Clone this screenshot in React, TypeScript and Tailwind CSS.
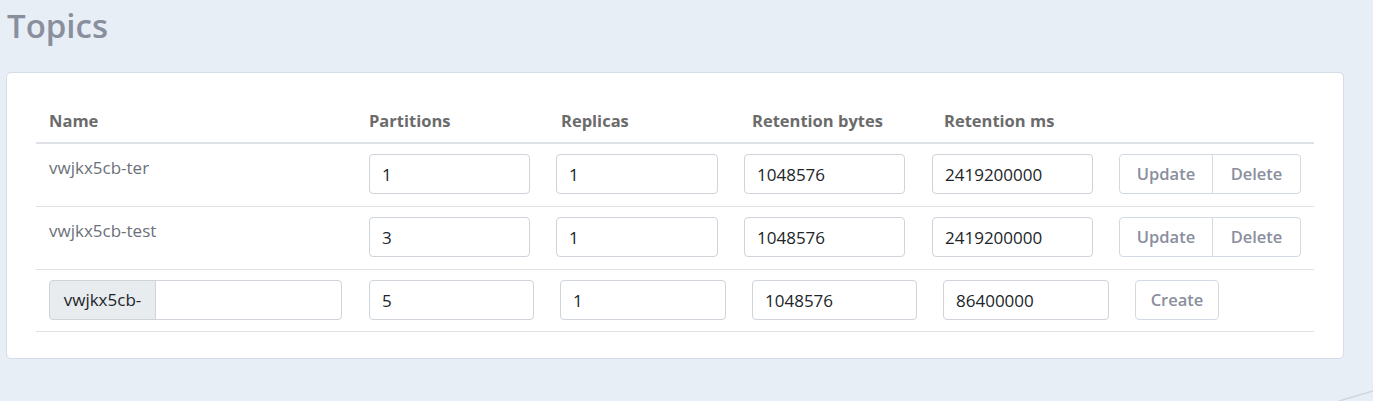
import { useState } from "react";

type Topic = {
  name: string;
  partitions: string;
  replicas: string;
  retentionBytes: string;
  retentionMs: string;
};

const initialTopics: Topic[] = [
  { name: "vwjkx5cb-ter", partitions: "1", replicas: "1", retentionBytes: "1048576", retentionMs: "2419200000" },
  { name: "vwjkx5cb-test", partitions: "3", replicas: "1", retentionBytes: "1048576", retentionMs: "2419200000" },
];

const inputCls =
  "h-10 rounded-[4px] border border-[#ced4da] bg-white px-3 text-[17px] text-[#212529] outline-none focus:border-[#80bdff]";

const btnCls =
  "h-10 border border-[#d3d9e3] bg-white px-3 text-[16.5px] font-semibold text-[#8a8e9e] hover:bg-gray-50";

export default function App() {
  const [topics, setTopics] = useState<Topic[]>(initialTopics);
  const [draft, setDraft] = useState({
    name: "",
    partitions: "5",
    replicas: "1",
    retentionBytes: "1048576",
    retentionMs: "86400000",
  });

  const setField = (i: number, key: keyof Topic, value: string) => {
    setTopics((prev) => prev.map((t, idx) => (idx === i ? { ...t, [key]: value } : t)));
  };

  return (
    <div
      className="relative min-h-screen bg-[#e8eef6] pl-[6px] pr-[29px] pt-[1px]"
      style={{ fontFamily: '"Open Sans", "Noto Sans", sans-serif' }}
    >
      <h1 className="ml-px h-[71px] pt-[5px] text-[33px] font-semibold leading-[40px] text-[#8a8f9e]">Topics</h1>

      <div className="rounded-[5px] border border-[#d4dce8] bg-white px-[29px] pb-[26px] pt-[25px]">
        {/* header */}
        <div className="flex h-[46px] items-start border-b-2 border-[#dee2e6] pl-[13px] pt-[11px] text-[16.5px] font-bold leading-6 text-[#6b6b6b]">
          <div className="w-[320px]">Name</div>
          <div className="w-[192px]">Partitions</div>
          <div className="w-[191px]">Replicas</div>
          <div className="w-[192px]">Retention bytes</div>
          <div>Retention ms</div>
        </div>

        {topics.map((t, i) => (
          <div key={t.name} className="flex h-[63px] items-start border-b border-[#dee2e6] pl-[13px] pt-[10px]">
            <div className="w-[320px] pt-[2px] text-[17px] leading-6 text-[#6c7079]">{t.name}</div>
            <input
              value={t.partitions}
              onChange={(e) => setField(i, "partitions", e.target.value)}
              className={`${inputCls} w-[161px]`}
            />
            <input
              value={t.replicas}
              onChange={(e) => setField(i, "replicas", e.target.value)}
              className={`${inputCls} ml-[26px] w-[162px]`}
            />
            <input
              value={t.retentionBytes}
              onChange={(e) => setField(i, "retentionBytes", e.target.value)}
              className={`${inputCls} ml-[26px] w-[161px]`}
            />
            <input
              value={t.retentionMs}
              onChange={(e) => setField(i, "retentionMs", e.target.value)}
              className={`${inputCls} ml-[27px] w-[161px]`}
            />
            <div className="ml-[26px] flex">
              <button className={`${btnCls} w-[94px] rounded-l-[4px]`}>Update</button>
              <button
                onClick={() => setTopics((prev) => prev.filter((_, idx) => idx !== i))}
                className={`${btnCls} -ml-px w-[89px] rounded-r-[4px]`}
              >
                Delete
              </button>
            </div>
          </div>
        ))}

        {/* create row */}
        <div className="flex h-[62px] items-start border-b border-[#dee2e6] pl-[13px] pt-[10px]">
          <div className="flex h-10 w-[293px] shrink-0">
            <span className="flex h-10 w-[107px] shrink-0 items-center justify-center rounded-l-[4px] border border-[#ced4da] bg-[#e9ecef] text-[17px] text-[#212529]">
              vwjkx5cb-
            </span>
            <input
              value={draft.name}
              onChange={(e) => setDraft({ ...draft, name: e.target.value })}
              className="-ml-px h-10 w-0 min-w-0 flex-1 rounded-r-[4px] border border-[#ced4da] px-3 text-[17px] outline-none"
            />
          </div>
          <input
            value={draft.partitions}
            onChange={(e) => setDraft({ ...draft, partitions: e.target.value })}
            className={`${inputCls} ml-[27px] w-[165px]`}
          />
          <input
            value={draft.replicas}
            onChange={(e) => setDraft({ ...draft, replicas: e.target.value })}
            className={`${inputCls} ml-[26px] w-[166px]`}
          />
          <input
            value={draft.retentionBytes}
            onChange={(e) => setDraft({ ...draft, retentionBytes: e.target.value })}
            className={`${inputCls} ml-[26px] w-[165px]`}
          />
          <input
            value={draft.retentionMs}
            onChange={(e) => setDraft({ ...draft, retentionMs: e.target.value })}
            className={`${inputCls} ml-[26px] w-[166px]`}
          />
          <button className={`${btnCls} ml-[26px] w-[84px] rounded-[4px]`}>Create</button>
        </div>
      </div>

      <svg className="absolute bottom-0 right-0" width="40" height="14" viewBox="0 0 40 14">
        <line x1="6" y1="14" x2="40" y2="4" stroke="#d2d6dd" strokeWidth="1.5" />
      </svg>
    </div>
  );
}
